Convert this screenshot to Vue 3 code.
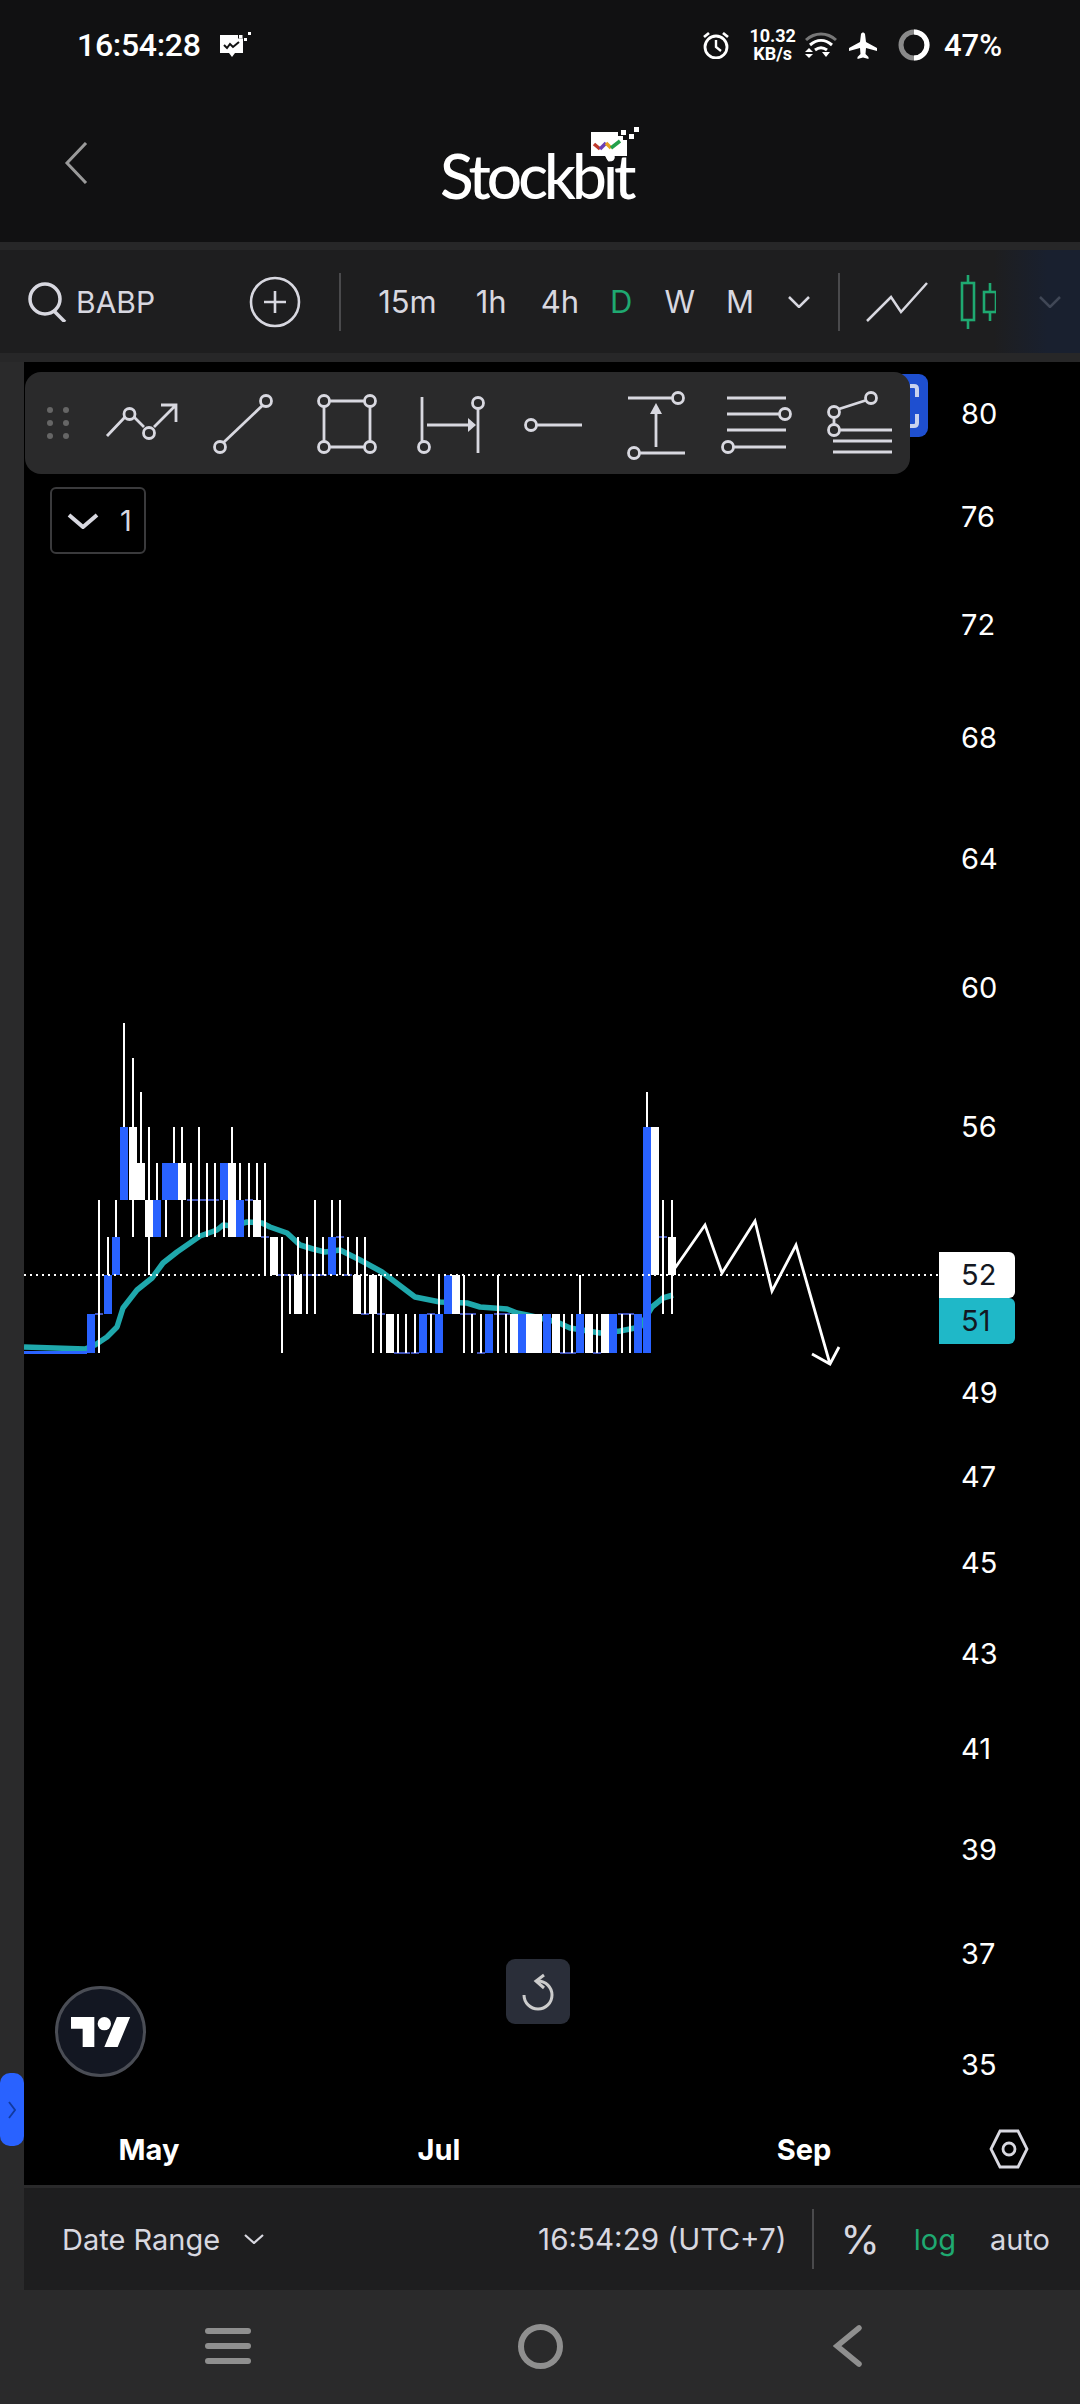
<script setup>
const lv = { 50: 1353, 51: 1314, 52: 1275, 53: 1237, 54: 1200, 55: 1163, 56: 1127, 57: 1092, 58: 1058, 59: 1023 }
// x, kind (b blue body, w white body, d doji), top, bottom, high, low
const raw = [
  [91,'b',51,50],[99,'d',51,51,54,50],[108,'b',52,51,53],[116,'b',53,52,54],[124,'b',56,54,59],
  [133,'w',56,54,58,53],[141,'w',55,54,57],[149,'w',54,53,56,52],[157,'b',54,53,55],[166,'b',55,54,55,53],
  [174,'b',55,54,56],[182,'w',55,54,56,53],[191,'d',54,54,55,53],[199,'d',54,54,56,53],[207,'d',54,54,55,53],
  [215,'d',54,54,55,53],[224,'b',55,54,55,53],[232,'w',55,53,56],[240,'b',54,53,55],[249,'d',54,54,55,53],
  [257,'w',54,53,55],[265,'d',53,53,55,52],[274,'w',53,52],[282,'d',52,52,53,50],[290,'d',52,52,52,51],
  [298,'w',52,51,53],[307,'d',52,52,53,51],[315,'d',52,52,54,51],[323,'d',52,52,53,52],[332,'b',53,52,54],
  [340,'d',53,53,54,52],[348,'d',52,52,53,52],[357,'w',52,51,53],[365,'d',51,51,53,51],[373,'w',52,51,52,50],
  [381,'d',51,51,52,50],[390,'w',51,50],[398,'d',50,50,51,50],[406,'d',50,50,51,50],[415,'d',50,50,51,50],
  [423,'b',51,50],[431,'d',51,51,51,50],[439,'b',51,50,52],[448,'b',52,51],[456,'w',52,51],
  [464,'d',51,51,52,50],[472,'d',51,51,51,50],[481,'d',50,50,51,50],[489,'b',51,50],[498,'d',51,51,52,50],
  [506,'d',51,51,51,50],[514,'w',51,50],[522,'b',51,50],[530,'w',51,50],[538,'w',51,50],[547,'b',51,50],
  [556,'w',51,50],[564,'d',50,50,51,50],[572,'d',50,50,51,50],[580,'b',51,50,52],[589,'w',51,50],
  [597,'d',50,50,51,50],[605,'w',51,50],[613,'b',51,50],[622,'d',51,51,51,50],[630,'d',51,51,51,50],
  [638,'b',51,50],[647,'b',56,50,57],[655,'w',56,52],[663,'d',53,53,54,51],[672,'w',53,52,54,51]
]
const candles = raw.map(([x, kind, top, bottom, high, low]) => ({
  x, kind,
  y: lv[top],
  h: lv[bottom] - lv[top],
  y1: lv[high ?? top],
  y2: lv[low ?? bottom]
}))
const bodies = candles.filter(c => c.kind !== 'd')
const ticks = candles.filter(c => c.kind === 'd')
const ma = '24,1347 85,1349 95,1345 107,1337 117,1327 123,1308 137,1290 152,1278 163,1263 177,1252 200,1236 217,1230 223,1225 233,1226 247,1222 262,1223 270,1227 287,1233 300,1245 313,1249 325,1252 340,1250 360,1260 382,1272 415,1297 440,1302 467,1303 480,1307 507,1309 517,1313 527,1315 557,1322 570,1328 600,1333 620,1331 640,1327 652,1307 663,1298 673,1295'
const axis = [[80,414],[76,517],[72,625],[68,738],[64,859],[60,988],[56,1127],[49,1393],[47,1477],[45,1563],[43,1654],[41,1749],[39,1850],[37,1954],[35,2065]]
  .map(([label, y]) => ({ label, top: y - 362 }))
const months = [{ label: 'May', x: 149 }, { label: 'Jul', x: 439 }, { label: 'Sep', x: 804 }]
</script>

<template>
  <div class="phone">
    <header class="top">
      <div class="status">
        <span class="clock">16:54:28</span>
        <svg class="noti" width="31" height="26" viewBox="0 0 31 26">
          <path d="M0 3h18v3.500h5V21H15l-3 4-3-4H0z" fill="#fff" />
          <path d="M4 13l3 3 3-4 3 3 6-5" fill="none" stroke="#111" stroke-width="2" />
          <path d="M19 3h3.500v3.500H19zM24 6h3v3h-3zM28 0h3v3h-3z" fill="#fff" />
        </svg>
        <span class="spacer"></span>
        <svg class="s1" width="28" height="28" viewBox="0 0 28 28" fill="none" stroke="#fff">
          <circle cx="14" cy="16" r="11" stroke-width="2.800" />
          <path d="M14 9v7l5 4" stroke-width="2.400" />
          <path d="M2 6l5-4M26 6l-5-4" stroke-width="2.800" />
        </svg>
        <span class="speed"><b>10.32</b><b>KB/s</b></span>
        <svg class="s2" width="34" height="26" viewBox="0 0 34 26" fill="none">
          <path d="M2 8C11 0 23 0 32 8" stroke="#777" stroke-width="3" />
          <path d="M6 13c7-6 15-6 22 0M11 18c4-3 8-3 12 0" stroke="#fff" stroke-width="3" />
          <path d="M5 16l4 4H1zM1 22h8l-4 4zM18 20h8l-4 5z" fill="#fff" />
        </svg>
        <svg class="s3" width="28" height="27" viewBox="0 0 28 27">
          <path d="M12 2c1-2 3-2 4 0l1 8 11 6v3l-11-3-.5 6 3 3v2l-5.500-1.500L8.500 27v-2l3-3-.5-6L0 19v-3l11-6z" fill="#fff" />
        </svg>
        <svg class="ring" width="32" height="32" viewBox="0 0 32 32" fill="none" stroke-width="5">
          <circle cx="16" cy="16" r="13" stroke="#8a8a8a" />
          <path d="M16 3a13 13 0 0 1 0 26" stroke="#fff" />
        </svg>
        <span class="batt">47%</span>
      </div>
      <div class="appbar">
        <svg class="back" width="24" height="42" viewBox="0 0 24 42" fill="none" stroke="#9a9a9a" stroke-width="3">
          <path d="M22 1L3 21l19 20" />
        </svg>
        <div class="logo">
          <span class="logo-word">Stockbit</span>
          <svg class="logo-mark" width="50" height="38" viewBox="0 0 50 38">
            <path d="M0 5h27v4h5v4h4v16H21l-3 6-4-6H0z" fill="#fff" />
            <path d="M3 17l6 5" stroke="#c0392b" stroke-width="3.500" fill="none" />
            <path d="M9 22l6-6" stroke="#6a3fb5" stroke-width="3.500" fill="none" />
            <path d="M15 16l5 5" stroke="#e8a020" stroke-width="3.500" fill="none" />
            <path d="M20 21l9-7" stroke="#22a04a" stroke-width="3.500" fill="none" />
            <path d="M30 3h5v5h-5zM38 7h5v5h-5zM43 0h5v5h-5z" fill="#fff" />
          </svg>
        </div>
      </div>
    </header>
    <div class="band"></div>
    <div class="toolbar">
      <svg class="search" width="40" height="40" viewBox="0 0 40 40" fill="none" stroke="#d8d8e0" stroke-width="3.500">
        <circle cx="18" cy="17" r="15" />
        <path d="M27 29l11 11" />
      </svg>
      <span class="sym">BABP</span>
      <svg class="plus" width="52" height="52" viewBox="0 0 52 52" fill="none" stroke="#d8d8e0" stroke-width="2.600">
        <circle cx="26" cy="26" r="24" />
        <path d="M26 15v22M15 26h22" />
      </svg>
      <i class="vr first"></i>
      <div class="tfs">
        <span class="f15">15m</span><span class="f1">1h</span><span class="f4">4h</span><span class="fd">D</span><span class="fw">W</span><span class="fm">M</span>
      </div>
      <svg class="chev" width="22" height="12" viewBox="0 0 22 12" fill="none" stroke="#d8d8e0" stroke-width="2.500">
        <path d="M1 1l10 10L21 1" />
      </svg>
      <i class="vr second"></i>
      <svg class="lineicon" width="62" height="40" viewBox="0 0 62 40" fill="none" stroke="#d8d8e0" stroke-width="2.500">
        <path d="M1 39l24-24 10 15L61 1" />
      </svg>
      <svg class="candleicon" width="36" height="54" viewBox="0 0 36 54" fill="none" stroke="#1fa971" stroke-width="2.600">
        <path d="M8 0v54M30 8v38" />
        <rect x="2" y="8" width="12" height="37" fill="#1e1e1f" />
        <rect x="24" y="17" width="12" height="20" fill="#1e1e1f" />
      </svg>
      <svg class="chev dim" width="22" height="12" viewBox="0 0 22 12" fill="none" stroke="#404756" stroke-width="2.500">
        <path d="M1 1l10 10L21 1" />
      </svg>
    </div>
    <div class="gap"></div>
    <div class="main">
      <aside class="gutter">
        <div class="handle">
          <svg width="8" height="18" viewBox="0 0 8 18" fill="none" stroke="#123a9e" stroke-width="1.800">
            <path d="M1 1l6 8-6 8" />
          </svg>
        </div>
      </aside>
      <div class="content">
        <section class="chart">
          <svg class="plot" width="1056" height="1823" viewBox="24 362 1056 1823">
            <polyline :points="ma" fill="none" stroke="#1fa8ac" stroke-width="5.500" stroke-linejoin="round" />
            <rect x="24" y="1351" width="63" height="3" fill="#2962ff" shape-rendering="crispEdges" />
            <g shape-rendering="crispEdges">
              <rect v-for="t in ticks" :key="'t' + t.x" :x="t.x - 4" :y="t.y - 1" width="8" height="2" fill="#3f51b5" />
              <rect v-for="c in candles" :key="'w' + c.x" :x="c.x - 1" :y="c.y1" width="2" :height="c.y2 - c.y1" fill="#fff" />
              <rect v-for="c in bodies" :key="'b' + c.x" :x="c.x - 4" :y="c.y" width="8" :height="c.h" :fill="c.kind === 'b' ? '#2962ff' : '#fff'" />
            </g>
            <line x1="24" y1="1275" x2="939" y2="1275" stroke="#fff" stroke-width="2" stroke-dasharray="2 4" />
            <path d="M675 1268L705 1225 722 1273 755 1221 772 1291 796 1245 830 1364M812 1354L830 1364 839 1347" fill="none" stroke="#fff" stroke-width="2.800" />
          </svg>

          <span v-for="a in axis" :key="a.label" class="tick" :style="{ top: a.top + 'px' }">{{ a.label }}</span>
          <div class="tag light">52</div>
          <div class="tag teal">51</div>

          <span v-for="m in months" :key="m.label" class="month" :style="{ left: m.x - 24 + 'px' }">{{ m.label }}</span>
          <svg class="hex" width="44" height="40" viewBox="0 0 44 40" fill="none" stroke="#d8d8e0" stroke-width="2.800">
            <path d="M13 2h18l9 18-9 18H13L4 20z" />
            <circle cx="22" cy="20" r="6" />
          </svg>

          <div class="hidden-btn">
            <svg width="44" height="63" viewBox="0 0 44 63" fill="none" stroke="#c8d2ee" stroke-width="4">
              <path d="M26 12h4q3 0 3 3v8M33 40v9q0 3-3 3h-4" />
            </svg>
          </div>
          <div class="tools">
            <div class="grip"><i v-for="n in 6" :key="n"></i></div>
            <svg width="64" height="64" viewBox="0 0 64 64">
              <g fill="none" stroke="#d8d8e0" stroke-width="2.800">
                <path d="M-2 45L16 26M25 26L35 36M45 36L67 14M52 14H67V31" />
                <circle cx="20.500" cy="23" r="5.500" /><circle cx="40" cy="42" r="5.500" />
              </g>
            </svg>
            <svg width="64" height="64" viewBox="0 0 64 64">
              <g fill="none" stroke="#d8d8e0" stroke-width="2.800">
                <path d="M11 52L51 14" /><circle cx="8" cy="56" r="5.500" /><circle cx="54" cy="10" r="5.500" />
              </g>
            </svg>
            <svg width="64" height="64" viewBox="0 0 64 64">
              <g fill="none" stroke="#d8d8e0" stroke-width="2.800">
                <path d="M15 10H49M15 56H49M9 16V50M55 16V50" />
                <circle cx="9" cy="10" r="5.500" /><circle cx="55" cy="10" r="5.500" /><circle cx="9" cy="56" r="5.500" /><circle cx="55" cy="56" r="5.500" />
              </g>
            </svg>
            <svg width="64" height="64" viewBox="0 0 64 64">
              <g fill="none" stroke="#d8d8e0" stroke-width="2.800">
                <path d="M4 6V50M60 18V62M9 34H52" /><circle cx="6" cy="56" r="5.500" /><circle cx="60" cy="12" r="5.500" />
              </g>
              <path d="M50 27l8 7-8 7z" fill="#d8d8e0" />
            </svg>
            <svg width="64" height="64" viewBox="0 0 64 64">
              <g fill="none" stroke="#d8d8e0" stroke-width="2.800">
                <path d="M16 34H61" /><circle cx="10" cy="34" r="5.500" />
              </g>
            </svg>
            <svg width="64" height="64" viewBox="0 0 64 64">
              <g fill="none" stroke="#d8d8e0" stroke-width="2.800">
                <path d="M4 7H49M15 62H61M32 16V56" /><circle cx="54" cy="7" r="5.500" /><circle cx="10" cy="62" r="5.500" />
              </g>
              <path d="M32 12l6 11H26z" fill="#d8d8e0" />
            </svg>
            <svg width="64" height="64" viewBox="0 0 64 64">
              <g fill="none" stroke="#d8d8e0" stroke-width="2.800">
                <path d="M0 7H59M0 23H52M0 39H59M7 56H59" /><circle cx="58" cy="23" r="5.500" /><circle cx="1" cy="56" r="5.500" />
              </g>
            </svg>
            <svg width="64" height="64" viewBox="0 0 64 64">
              <g fill="none" stroke="#d8d8e0" stroke-width="2.800">
                <path d="M9 18L37 9M4 26V34M9 39H62M3 50H62M3 61H62" />
                <circle cx="41" cy="7" r="5.500" /><circle cx="4" cy="21" r="5.500" /><circle cx="4" cy="39" r="5.500" />
              </g>
            </svg>
          </div>

          <div class="collapse">
            <svg width="32" height="16" viewBox="0 0 32 16" fill="none" stroke="#d8d8e0" stroke-width="4">
              <path d="M2 2l14 12L30 2" />
            </svg>
            <span>1</span>
          </div>

          <div class="reset">
            <svg width="36" height="38" viewBox="0 0 36 38" fill="none" stroke="#ccc" stroke-width="3">
              <path d="M4 22a14 14 0 1 0 14-14" />
              <path d="M24 2l-8 6 8 7" />
            </svg>
          </div>

          <div class="tvbadge">
            <svg width="60" height="30" viewBox="0 4 36 18">
              <path d="M14 22H7V11H0V4h14v18zM28 22h-8l7.500-18h8L28 22z" fill="#fff" />
              <circle cx="20" cy="8" r="4" fill="#fff" />
            </svg>
          </div>
        </section>
        <div class="rule"></div>
        <footer class="foot">
          <span class="dr">Date Range</span>
          <svg class="drc" width="20" height="10" viewBox="0 0 20 10" fill="none" stroke="#d8d8e0" stroke-width="2.200">
            <path d="M1 1l9 8 9-8" />
          </svg>
          <span class="spacer"></span>
          <span class="time">16:54:29 (UTC+7)</span>
          <i class="vr third"></i>
          <span class="pct">%</span>
          <span class="log">log</span>
          <span class="auto">auto</span>
        </footer>
      </div>
    </div>
    <nav class="nav">
      <div class="burger"><i></i><i></i><i></i></div>
      <div class="home"></div>
      <svg class="nback" width="30" height="42" viewBox="0 0 30 42" fill="none" stroke="#8f8f8f" stroke-width="5.500" stroke-linecap="round">
        <path d="M26 3L4 21l22 18" />
      </svg>
    </nav>
  </div>
</template>

<style scoped>
.phone {
  width: 1080px;
  height: 2404px;
  display: flex;
  flex-direction: column;
  background: #2a2a2b;
  font-family: Inter, "Noto Sans", sans-serif;
  color: #d8d8e0;
  overflow: hidden;
}
.top { height: 242px; background: #111112; display: flex; flex-direction: column; }
.status {
  height: 90px;
  display: flex;
  align-items: center;
  padding: 0 78px 0 77px;
  color: #fff;
  font-family: Roboto, sans-serif;
}
.clock { font-size: 32px; font-weight: 500; letter-spacing: -0.3px; }
.noti { margin-left: 19px; }
.spacer { flex: 1; }
.speed {
  margin-left: 19px;
  display: flex;
  flex-direction: column;
  align-items: center;
  font-size: 18px;
  line-height: 18px;
}
.s2 { margin-left: 8px; }
.s3 { margin-left: 11px; }
.ring { margin-left: 21px; }
.batt { margin-left: 14px; font-size: 31px; font-weight: 500; }
.appbar { display: flex; align-items: flex-start; padding-left: 64px; }
.back { margin-top: 52px; }
.logo { position: relative; margin: 37px 0 0 352px; width: 197px; padding-top: 20px; }
.logo-word {
  display: block;
  font-family: Lato, sans-serif;
  font-size: 62px;
  line-height: 56px;
  letter-spacing: -3.9px;
  color: #fff;
  font-weight: 500;
}
.logo-mark { position: absolute; left: 151px; top: 0; overflow: visible; }
.band { height: 8px; background: #272728; }
.toolbar {
  height: 103px;
  display: flex;
  align-items: center;
  padding-left: 27px;
  background: linear-gradient(90deg, #1e1e1f 92%, #19202f 97%);
  color: #d8d8e0;
  font-size: 30px;
}
.sym { margin-left: 9px; }
.plus { margin-left: 94px; }
.vr { display: block; width: 2px; background: #4a4a4c; }
.vr.first { height: 58px; margin-left: 38px; }
.tfs { display: flex; margin-left: 37px; font-size: 31px; }
.f1 { margin-left: 39px; }
.f4 { margin-left: 34px; }
.fd { margin-left: 31px; }
.fw { margin-left: 32px; }
.fm { margin-left: 31px; }
.tfs .fd { color: #1fa971; }
.chev { margin-left: 34px; }
.vr.second { height: 58px; margin-left: 28px; }
.lineicon { margin-left: 26px; }
.candleicon { margin-left: 32px; }
.chev.dim { margin-left: 43px; }
.gap { height: 9px; background: #272728; }
.main { flex: 1; display: flex; }
.gutter { width: 24px; position: relative; }
.handle {
  position: absolute;
  left: 0;
  top: 1711px;
  width: 24px;
  height: 73px;
  background: #2962ff;
  border-radius: 10px;
  display: flex;
  align-items: center;
  justify-content: center;
}
.content { flex: 1; display: flex; flex-direction: column; }
.chart { position: relative; height: 1823px; background: #000; overflow: hidden; }
.plot { display: block; }
.tick {
  position: absolute;
  left: 937px;
  transform: translateY(-50%);
  color: #fff;
  font-size: 29px;
  line-height: 36px;
}
.tag {
  position: absolute;
  left: 915px;
  width: 76px;
  height: 46px;
  border-radius: 0 6px 6px 0;
  padding-left: 22px;
  box-sizing: border-box;
  font-size: 29px;
  line-height: 46px;
  color: #131722;
}
.tag.light { top: 890px; background: #fff; }
.tag.teal { top: 936px; background: #1fb8c8; }
.month {
  position: absolute;
  top: 1770px;
  transform: translateX(-50%);
  color: #fff;
  font-size: 29px;
  line-height: 36px;
  font-weight: 700;
}
.hex { position: absolute; left: 963px; top: 1767px; }
.hidden-btn {
  position: absolute;
  left: 860px;
  top: 12px;
  width: 44px;
  height: 63px;
  background: #1e4fd0;
  border-radius: 9px;
}
.hidden-btn svg { display: block; }
.tools {
  position: absolute;
  left: 1px;
  top: 10px;
  width: 885px;
  height: 102px;
  box-sizing: border-box;
  padding: 19px 0 0 84px;
  background: #2a2a2b;
  border-radius: 16px;
  display: flex;
  gap: 39px;
}
.tools svg { overflow: visible; flex: none; }
.grip {
  position: absolute;
  left: 22px;
  top: 35px;
  display: grid;
  grid-template-columns: 6px 6px;
  column-gap: 10px;
  row-gap: 7px;
}
.grip i { width: 6px; height: 6px; border-radius: 50%; background: #666; }
.collapse {
  position: absolute;
  left: 26px;
  top: 125px;
  width: 96px;
  height: 67px;
  box-sizing: border-box;
  border: 2px solid #3a3a3c;
  border-radius: 6px;
  display: flex;
  align-items: center;
  gap: 21px;
  padding-left: 15px;
  color: #d8d8e0;
  font-size: 29px;
}
.reset {
  position: absolute;
  left: 482px;
  top: 1597px;
  width: 64px;
  height: 65px;
  background: #2a2e39;
  border-radius: 9px;
  display: flex;
  align-items: center;
  justify-content: center;
}
.tvbadge {
  position: absolute;
  left: 31px;
  top: 1624px;
  width: 91px;
  height: 91px;
  box-sizing: border-box;
  border: 3px solid #4a4d55;
  border-radius: 50%;
  background: #131722;
  display: flex;
  align-items: center;
  justify-content: center;
}
.rule { height: 3px; background: #2a2a2b; }
.foot {
  height: 102px;
  background: #1e1e1f;
  display: flex;
  align-items: center;
  padding: 0 30px 0 38px;
  font-size: 29px;
  color: #d8d8e0;
}
.drc { margin-left: 24px; }
.time { font-size: 29.6px; }
.vr.third { height: 60px; margin-left: 26px; }
.pct { margin-left: 26px; font-size: 40px; }
.log { margin-left: 34px; color: #1fa971; }
.auto { margin-left: 34px; }
.nav { flex: 1; position: relative; display: flex; align-items: center; padding: 0 0 2px 205px; }
.burger { width: 46px; display: flex; flex-direction: column; gap: 9px; }
.burger i { display: block; height: 6px; border-radius: 3px; background: #8f8f8f; }
.home {
  margin-left: 267px;
  width: 45px;
  height: 45px;
  box-sizing: border-box;
  border: 6px solid #8f8f8f;
  border-radius: 50%;
}
.nback { margin-left: 270px; }
</style>
